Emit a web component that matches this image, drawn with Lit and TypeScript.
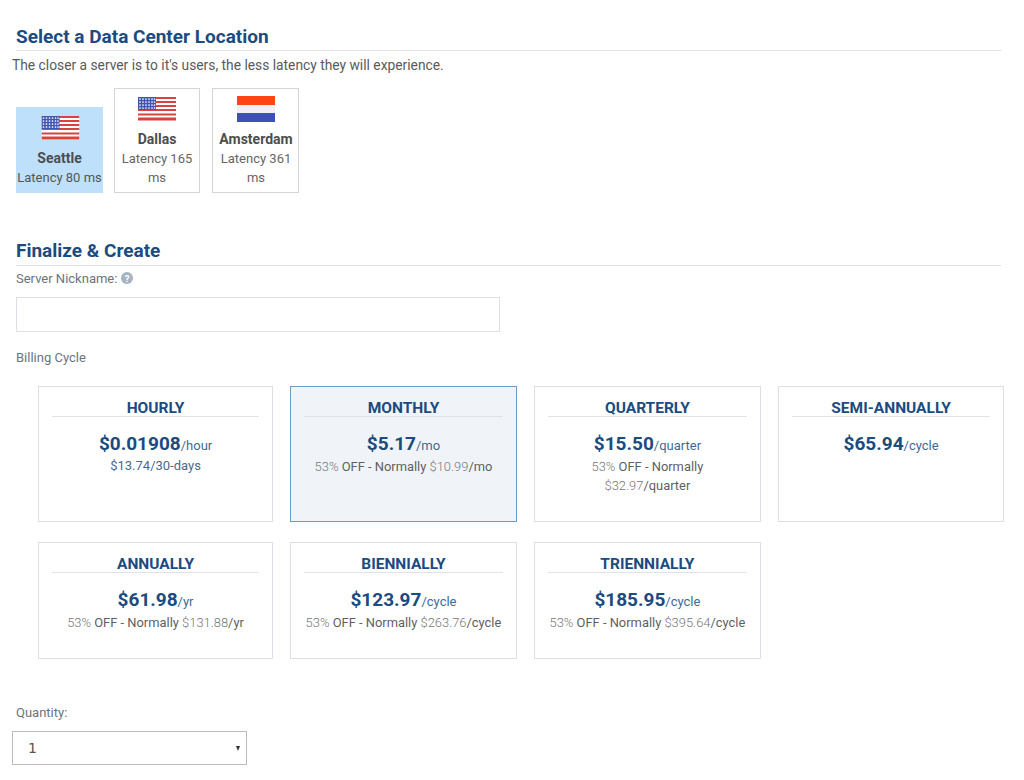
import { LitElement, html, css, svg } from "lit";
import { customElement } from "lit/decorators.js";

const usFlag = svg`<svg class="flag" width="38" height="24" viewBox="0 0 38 24">
  <rect width="38" height="24" fill="#fff"/>
  ${[0, 4, 8, 12, 16, 20].map((y, i) => svg`<rect y="${i < 4 ? y : y + 0.5}" width="38" height="${i === 5 ? 3 : 2}" fill="#d8433f"/>`)}
  <rect width="18" height="13" fill="#4056b0"/>
  ${[2, 5, 8, 11].map((y) => [2, 5, 8, 11, 14, 16.5].map((x) => svg`<circle cx="${x}" cy="${y}" r=".85" fill="#fff"/>`))}
</svg>`;

const nlFlag = svg`<svg class="flag" width="38" height="26" viewBox="0 0 38 26">
  <rect width="38" height="9" fill="#ff4413"/>
  <rect y="9" width="38" height="8" fill="#eef0f4"/>
  <rect y="17" width="38" height="9" fill="#3e50b4"/>
</svg>`;

interface Plan { name: string; price: string; unit: string; notes?: unknown; selected?: boolean; }

const off = (was: string, per: string, brk = false) => html`<div class="note"><span class="light">53%</span> OFF - Normally${brk ? html`<br />` : " "}<span class="light">${was}</span>${per}</div>`;

const plans: Plan[] = [
  { name: "HOURLY", price: "$0.01908", unit: "/hour", notes: html`<div class="note blue">$13.74/30-days</div>` },
  { name: "MONTHLY", price: "$5.17", unit: "/mo", notes: off("$10.99", "/mo"), selected: true },
  { name: "QUARTERLY", price: "$15.50", unit: "/quarter", notes: off("$32.97", "/quarter", true) },
  { name: "SEMI-ANNUALLY", price: "$65.94", unit: "/cycle" },
  { name: "ANNUALLY", price: "$61.98", unit: "/yr", notes: off("$131.88", "/yr") },
  { name: "BIENNIALLY", price: "$123.97", unit: "/cycle", notes: off("$263.76", "/cycle") },
  { name: "TRIENNIALLY", price: "$185.95", unit: "/cycle", notes: off("$395.64", "/cycle") },
];

@customElement("app-root")
export class AppRoot extends LitElement {
  static styles = css`
    :host { display: block; width: 1024px; height: 780px; overflow: hidden; background: #fff; font-family: Roboto, sans-serif; color: #555; box-sizing: border-box; padding: 24px 0 0 16px; }
    h2 { margin: 0; width: 985px; height: 27px; line-height: 26px; font-size: 19px; font-weight: 700; color: #1b4b7f; border-bottom: 1px solid #dfe3e8; box-sizing: border-box; }
    .desc { margin: 5px 0 0 -4px; font-size: 13.8px; line-height: 18px; color: #5a5a5a; }
    .locs { display: flex; align-items: flex-end; gap: 11px; margin-top: 14px; height: 105px; }
    .loc { box-sizing: border-box; width: 87px; border: 1px solid #d5d5d5; padding: 8px 0 5px; text-align: center; font-size: 13px; line-height: 19px; color: #666; }
    .loc.sel { border-color: #bfe0fb; background: #bfe0fb; color: #555; white-space: nowrap; }
    .loc.sel .flag { transform: translateX(0.5px); }
    .loc.mid { width: 86px; margin-right: 1px; }
    .loc.nl { padding-left: 1px; }
    .loc b { display: block; color: #4d4d4d; font-size: 14px; font-weight: 700; }
    .flag { display: block; margin: 0 auto 9px; }
    .loc.nl .flag { margin: -1px auto 8px; }
    .second { margin-top: 46px; line-height: 24px; }
    .label { font-size: 13px; line-height: 16px; color: #6a7480; }
    .nick { margin-top: 5px; }
    .hint { display: inline-block; vertical-align: -1px; }
    .input { box-sizing: border-box; width: 484px; height: 35px; margin-top: 10px; border: 1px solid #dcdfe3; }
    .billing { margin-top: 18px; }
    .grid { display: grid; grid-template-columns: 234.5px 227px 226.5px 226.5px; grid-template-rows: 135.5px 117px; column-gap: 17.2px; row-gap: 20.5px; margin: 20px 0 0 22.3px; }
    .plan { box-sizing: border-box; border: 1px solid #dcdfe3; padding: 12px 13px 0; text-align: center; }
    .plan.sel { background: #f0f4f9; border-color: #6c9cc6; }
    .name { height: 17px; line-height: 19px; font-size: 15.5px; font-weight: 700; color: #1b4b7f; border-bottom: 1px solid #e0e4e8; }
    .price { margin-top: 16px; line-height: 22px; font-size: 19px; font-weight: 700; color: #1b4b7f; white-space: nowrap; }
    .unit { font-size: 13px; font-weight: 400; color: #3f6a94; }
    .note { font-size: 12.9px; line-height: 19px; color: #5f5f5f; margin-top: 0; white-space: nowrap; }
    .note.blue { color: #4a6a8a; font-size: 13px; margin-top: -1px; }
    .light { font-weight: 300; color: #777; }
    .qty { margin-top: 46px; }
    .select { box-sizing: border-box; display: flex; align-items: center; justify-content: space-between; width: 235px; height: 34px; margin: 10px 0 0 -4px; padding: 0 6px 0 15px; border: 1px solid #bbb; font-family: "DejaVu Sans", sans-serif; font-size: 14px; color: #555; }
    .arrow { width: 0; height: 0; border-left: 2.5px solid transparent; border-right: 2.5px solid transparent; border-top: 5px solid #333; }
  `;

  render() {
    return html`
      <h2>Select a Data Center Location</h2>
      <p class="desc">The closer a server is to it's users, the less latency they will experience.</p>
      <div class="locs">
        <div class="loc sel">${usFlag}<b>Seattle</b>Latency 80 ms</div>
        <div class="loc mid">${usFlag}<b>Dallas</b>Latency 165 ms</div>
        <div class="loc nl">${nlFlag}<b>Amsterdam</b>Latency 361 ms</div>
      </div>
      <h2 class="second">Finalize &amp; Create</h2>
      <div class="label nick">Server Nickname:
        <svg class="hint" width="12" height="12" viewBox="0 0 12 12"><circle cx="6" cy="6" r="6" fill="#a5b3c2"/><text x="6" y="9.5" text-anchor="middle" font-size="9.5" font-weight="700" font-family="Roboto, sans-serif" fill="#fff">?</text></svg>
      </div>
      <div class="input"></div>
      <div class="label billing">Billing Cycle</div>
      <div class="grid">
        ${plans.map((p) => html`
          <div class="plan ${p.selected ? "sel" : ""}">
            <div class="name">${p.name}</div>
            <div class="price">${p.price}<span class="unit">${p.unit}</span></div>
            ${p.notes ?? ""}
          </div>`)}
      </div>
      <div class="label qty">Quantity:</div>
      <div class="select"><span>1</span><span class="arrow"></span></div>
    `;
  }
}
